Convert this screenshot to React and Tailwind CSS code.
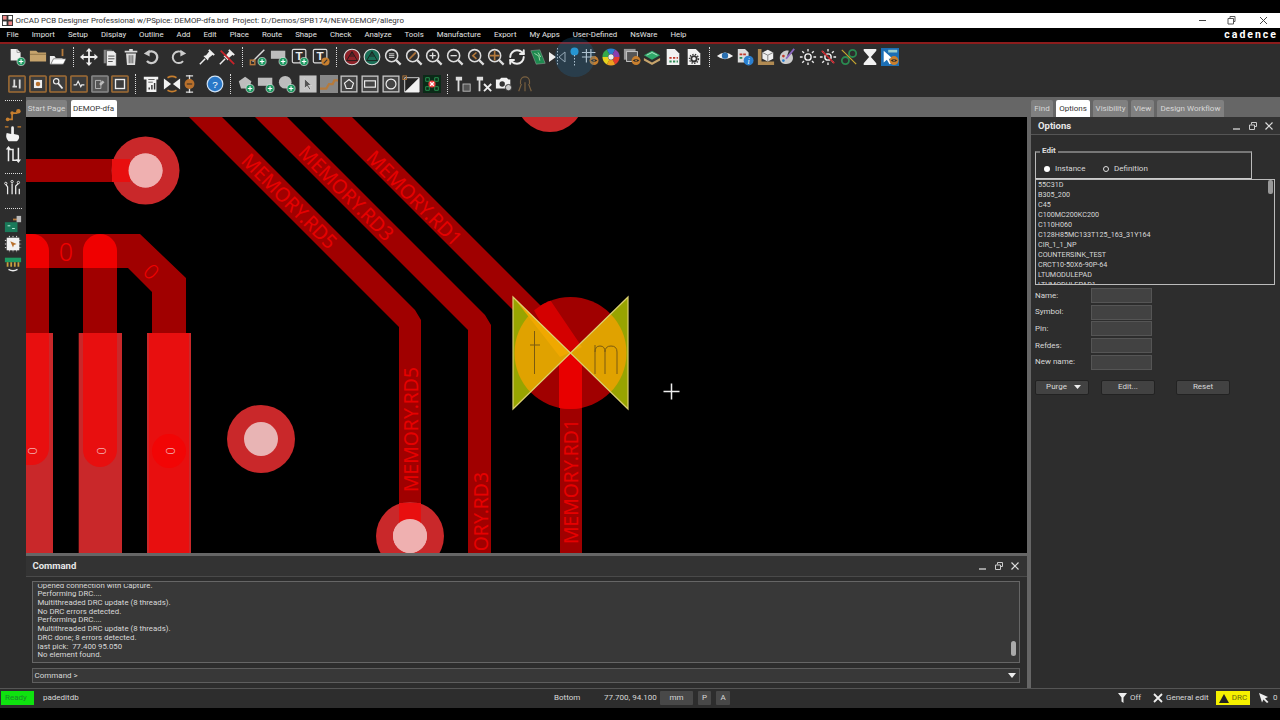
import React from "react";
import { RefreshCw } from "lucide-react";

const S = ({ children, vb = "0 0 20 20", cls = "w-[18px] h-[18px]" }) => (
  <svg viewBox={vb} className={cls} fill="none">{children}</svg>
);
const Plus = () => (
  <g><circle cx="14.5" cy="15" r="4.5" fill="#1e9b62" stroke="#e8e8e8" strokeWidth=".7" /><path d="M14.5 12.5v5M12 15h5" stroke="#fff" strokeWidth="1.3" /></g>
);
const Eyeb = () => (
  <g><circle cx="14.5" cy="14" r="5" fill="#c87f2e" /><path d="M10.8 14q3.7-3 7.4 0q-3.7 3-7.4 0z" fill="#2b2b2b" /><circle cx="14.5" cy="14" r="1" fill="#c87f2e" /></g>
);
const New = () => <S><path d="M3 1h7l4 4v9H3z" fill="#eee" /><path d="M10 1v4h4" stroke="#999" /><Plus /></S>;
const Open = () => <S><path d="M1 3h7l2 2h9v10H1z" fill="#c7a46c" /><path d="M1 7h18" stroke="#8d7346" /></S>;
const Folder2 = () => <S><path d="M1 9h5l1.500 2H15v7H1z" fill="#eee" /><path d="M2 18l3-6h14l-3 6z" fill="#fff" stroke="#333" strokeWidth=".6" /><path d="M15 1v8" stroke="#b57a3c" strokeWidth="2" /></S>;
const Move = () => <S><path d="M10 3v14M3 10h14" stroke="#eee" strokeWidth="2" /><path d="M10 0l3.500 4h-7zM10 20l3.500-4h-7zM0 10l4-3.500v7zM20 10l-4-3.500v7z" fill="#eee" /></S>;
const Copy = () => <S><path d="M3 2h9v15H3z" fill="#888" /><path d="M6 3h8l3 3v14H6z" fill="#eee" stroke="#2d2d2d" strokeWidth=".7" /><path d="M8 9h7M8 12h7M8 15h5" stroke="#444" /></S>;
const Trash = () => <S><path d="M3 4h14M8 2h4" stroke="#ddd" strokeWidth="2" /><path d="M4.500 6h11l-1 13h-9z" fill="#ddd" /><path d="M8 8v9M10 8v9M12 8v9" stroke="#555" /></S>;
const Undo = () => <S><path d="M6 5.500a6.500 6.500 0 1 1-.5 9" stroke="#ccc" strokeWidth="2.600" /><path d="M2 6l6.500-4v7.500z" fill="#ccc" /></S>;
const Redo = () => <S><path d="M14 5.500a6.500 6.500 0 1 0 .5 9" stroke="#ccc" strokeWidth="2.200" /><path d="M18 6l-6.500-4v7.500z" fill="#ccc" /></S>;
const PinI = ({ off }) => (
  <S><path d="M2 18l6-6" stroke="#eee" strokeWidth="1.600" /><path d="M6 9l3-1 4-5 4 4-5 4-1 3z" fill="#eee" /><path d="M12 2l6 6" stroke="#eee" strokeWidth="2" />{off && <path d="M3 3l15 15" stroke="#c8232a" strokeWidth="2" />}</S>
);
const LineI = () => <S><path d="M4 15L17 2" stroke="#ddd" strokeWidth="1.600" /><rect x="1.500" y="13.500" width="5" height="5" stroke="#b5763a" strokeWidth="1.600" /><Plus /></S>;
const RectP = () => <S><path d="M1 3h16v9H1z" fill="#bdbdbd" /><Plus /></S>;
const TBox = ({ o }) => (
  <S><rect x="1.500" y="1.500" width="15" height="15" rx="1.500" stroke="#ddd" strokeWidth="1.300" /><text x="9" y="13.500" textAnchor="middle" fontSize="13" fontWeight="700" fill="#eee" fontFamily="Liberation Sans">T</text>
    {o ? <g><circle cx="15" cy="15" r="4.500" fill="#c87f2e" /><path d="M13 17l4-4" stroke="#333" strokeWidth="1.300" /></g> : <Plus />}</S>
);
const Net = ({ c }) => <S><circle cx="10" cy="10" r="8.700" fill={c} stroke="#ddd" strokeWidth="1.200" /><path d="M10 4L16 14H4z" stroke="#1c1c1c" strokeWidth="1" /><path d="M10 4L7 10h6z" fill="#222" opacity=".5" /></S>;
const Mag = ({ children }) => <S><circle cx="8.500" cy="8.500" r="6.700" stroke="#ddd" strokeWidth="1.700" /><path d="M13.500 13.500l5 5" stroke="#ddd" strokeWidth="2.500" />{children}</S>;
const Board = () => <S><path d="M2 3l10-1 6 15-10 1z" fill="#1f8a50" stroke="#aaa" strokeWidth=".5" /><path d="M6 6l5 3 1 5M10 5l3 5" stroke="#a8e0b0" /></S>;
const NavArr = () => (
  <svg viewBox="0 0 21 20" className="w-[21px] h-5" fill="none"><path d="M1 5l7 5-7 5z" fill="#eee" /><path d="M17 5l-6 5 6 5z" stroke="#bbb" /><path d="M9.500 1v18" stroke="#ccc" strokeDasharray="1.500 1.500" /></svg>
);
const BluePin = () => (
  <svg viewBox="0 0 11 20" className="w-[11px] h-5" fill="none"><circle cx="5.500" cy="4.500" r="4" fill="#2aa3e0" /><path d="M5.500 8v11" stroke="#ddd" strokeDasharray="1.500 1.500" /></svg>
);
const GridE = () => <S><path d="M6 1v15M11 1v15M1 5h15M1 10h15" stroke="#ddd" strokeWidth="1.300" /><Eyeb /></S>;
const Wheel = () => (
  <S>{["#e33b2e", "#f0a020", "#e8d21e", "#37a84a", "#2a7fd0", "#8a3fb0"].map((c, i) => (
    <circle key={c} cx="10" cy="10" r="6.500" stroke={c} strokeWidth="6" pathLength="6" strokeDasharray="1 5" strokeDashoffset={-i} />
  ))}<circle cx="10" cy="10" r="3" fill="#eee" /></S>
);
const CopyE = () => <S><rect x="1" y="1" width="13" height="12" fill="#999" /><rect x="4" y="4" width="12" height="11" fill="#555" stroke="#ccc" /><Eyeb /></S>;
const Stack = () => <S><path d="M1 8l9-5 9 5-9 5z" fill="#2fa86a" /><path d="M1 11l9 5 9-5v3l-9 5-9-5z" fill="#c7a46c" /><path d="M4 8l6-3 6 3" stroke="#bfe8cf" /></S>;
const DocT = () => <S><path d="M3 1h9l5 5v13H3z" fill="#f2f2f2" /><path d="M6 10h2.500v2H6zM10 10h2.500v2H10zM14 10h1.500v2H14z" fill="#c0392b" /><path d="M6 14h2.500v2H6zM10 14h2.500v2H10zM14 14h1.500v2H14z" fill="#2e8b57" /></S>;
const DocG = () => <S><path d="M3 1h9l5 5v13H3z" fill="#f2f2f2" /><circle cx="10" cy="12" r="3" stroke="#333" strokeWidth="2" /><circle cx="10" cy="12" r="5" stroke="#333" strokeWidth="1.500" strokeDasharray="1.500 1.500" /></S>;
const Eye = () => <S><path d="M1 9q9-8 18 0q-9 7-18 0z" fill="#f2f2f2" /><circle cx="10" cy="8.500" r="3.500" fill="#2a6fb0" /></S>;
const DocI = () => <S><path d="M2 1h8l4 4v11H2z" fill="#ddd" /><path d="M4 6h3v2H4zM8 6h3v2H8z" fill="#c0392b" /><path d="M4 10h3v2H4z" fill="#2e8b57" /><circle cx="14" cy="14" r="5.500" fill="#2a7fd0" /><text x="14" y="17.500" textAnchor="middle" fontSize="9" fill="#fff" fontFamily="Liberation Serif" fontStyle="italic">i</text></S>;
const Ruler = () => <S><path d="M1 1h4v14h14v4H1z" fill="#b08a52" /><path d="M12 2l6 3v7l-6 3-6-3V5z" fill="#eee" /><path d="M6 5l6 3 6-3M12 8v7" stroke="#777" /></S>;
const Palette = () => <S><path d="M2 11C2 5 8 2 12 3l-2 6 5-3c2 3 3 8-2 11-4 2-11 1-11-6z" fill="#ccc" /><path d="M18 1L9 12" stroke="#8a66c0" strokeWidth="2" /><circle cx="6" cy="9" r="1.500" fill="#c0392b" /><circle cx="6" cy="14" r="1.500" fill="#2a7fd0" /></S>;
const Sun = ({ off }) => <S><circle cx="10" cy="10" r="3.500" stroke="#eee" strokeWidth="1.600" /><path d="M10 1v3M10 16v3M1 10h3M16 10h3M3.600 3.600l2 2M14.400 14.400l2 2M3.600 16.400l2-2M14.400 5.600l2-2" stroke="#eee" strokeWidth="1.500" />{off && <path d="M3 3l14 14" stroke="#c8232a" strokeWidth="1.800" />}</S>;
const Conn = () => <S><circle cx="6" cy="14" r="4" stroke="#2a8a50" strokeWidth="2" /><circle cx="14" cy="6" r="4" stroke="#2a8a50" strokeWidth="2" /><path d="M2 2l16 16" stroke="#c8a830" strokeWidth="1.300" /></S>;
const Hour = () => <S><path d="M3 1h14v2l-6 7 6 7v2H3v-2l6-7-6-7z" fill="#f2f2f2" /></S>;
const BlueBox = () => <S><rect x="0" y="0" width="20" height="20" fill="#1c6fb5" /><path d="M3 3v13l3.500-3 3 5 2-1-3-5h4.500z" fill="#fff" /><rect x="8" y="2" width="10" height="3" fill="#9cc" /><Eyeb /></S>;
const OBox = ({ g, children }) => (
  <S><rect x="1" y="1" width="18" height="18" rx="1" fill={g ? "#555" : "#3c3c3c"} stroke={g ? "#888" : "#a06c34"} strokeWidth="1.700" />{children}</S>
);
const LBox = ({ children }) => <S><rect x="0.500" y="0.500" width="19" height="19" fill="#c4c4c4" />{children}</S>;
const DocBars = () => <S><path d="M2 2h16v3h-2v14H5V5H2z" fill="#f2f2f2" /><path d="M8 16v-2M11 16v-5M14 16v-7" stroke="#333" strokeWidth="1.600" /><path d="M7 5h7M7 8h5" stroke="#555" /></S>;
const Swap = () => <S><path d="M1 4l8 6-8 6zM19 4l-8 6 8 6z" fill="#f2f2f2" /><path d="M5 3q5-3 10 0M5 17q5 3 10 0" stroke="#c87f2e" strokeWidth="1.800" /></S>;
const Comp = () => (
  <svg viewBox="0 0 14 20" className="w-[13px] h-[18px]" fill="none"><path d="M7 0v20M3 1h8M3 19h8" stroke="#ddd" strokeWidth="1.500" /><circle cx="7" cy="10" r="5.500" fill="#b8702c" /><path d="M4 10h6" stroke="#222" /></svg>
);
const Help = () => <S><circle cx="10" cy="10" r="8.700" fill="#2a78c8" stroke="#cfe2f5" strokeWidth="1.300" /><text x="10" y="14" textAnchor="middle" fontSize="11" fill="#fff" fontFamily="Liberation Sans">?</text></S>;
const PentP = () => <S><path d="M9 2l7 5-2.500 8h-9L2 7z" fill="#bdbdbd" /><Plus /></S>;
const CircP = () => <S><circle cx="8" cy="8" r="7" fill="#bdbdbd" /><Plus /></S>;
const Chip = () => <S><rect x="0" y="0" width="20" height="20" fill="#0b2a18" /><path d="M3 3h4v4H3zM13 3h4v4h-4zM3 13h4v4H3zM13 13h4v4h-4z" stroke="#2a9a55" /><circle cx="10" cy="10" r="4" fill="#e44" /><path d="M8 8l4 4M12 8l-4 4" stroke="#fff" strokeWidth="1.400" /></S>;
const Tool1 = () => <S><path d="M2 2h7v4H6v12H4V6H2z" fill="#ddd" /><rect x="10" y="10" width="8" height="8" fill="#555" stroke="#bbb" /></S>;
const Tool2 = () => <S><path d="M2 2h7v4H6v12H4V6H2z" fill="#ddd" /><path d="M10 10l8 8M18 10l-8 8" stroke="#eee" strokeWidth="2" /></S>;
const Camera = () => <S><path d="M1 5h4l2-2h6l2 2h2v10H1z" fill="#f2f2f2" /><circle cx="8" cy="10" r="3" fill="#333" /><circle cx="15" cy="14" r="3.500" fill="#ccc" stroke="#333" /></S>;
const Fan = () => <S><path d="M10 2a5 5 0 0 1 5 5v3M10 2a5 5 0 0 0-5 5v3M3 18l3-8M17 18l-3-8M10 8v10" stroke="#7a6140" strokeWidth="1.300" /></S>;

const Slot = ({ children, w = "w-[20.700px]" }) => <div className={`${w} h-5 flex items-center justify-center shrink-0`}>{children}</div>;
const Sep = () => (
  <div className="w-[10.300px] h-5 flex justify-center shrink-0"><div className="w-0 h-full border-l border-dotted border-[#ddd]" /></div>
);
const HDots = () => <div className="w-[17px] h-0 border-t border-dotted border-[#ddd]" />;

const menu = ["File", "Import", "Setup", "Display", "Outline", "Add", "Edit", "Place", "Route", "Shape", "Check", "Analyze", "Tools", "Manufacture", "Export", "My Apps", "User-Defined", "NsWare", "Help"];

const TR = "#a00000";
const RING = "#c9282a";
const HOT = "#e80f0f";
const LBL = "#e60000";

function Label({ t, x, y, r, len = 125 }) {
  return (
    <text transform={`translate(${x},${y}) rotate(${r})`} fontFamily="Noto Sans" fontSize="20" fill={LBL} textLength={len} lengthAdjust="spacingAndGlyphs">{t}</text>
  );
}
function Via({ x, y, hole = "#efb0b0" }) {
  return <g><circle cx={x} cy={y} r="34" fill={RING} /><circle cx={x} cy={y} r="17" fill={hole} /></g>;
}
function Canvas() {
  return (
    <svg viewBox="26 117 1001 436" className="w-[1001px] h-[436px] block bg-black">
      <defs>
        <clipPath id="bt"><path d="M513 297L570.500 353L513 409zM628 297L570.500 353L628 409z" /></clipPath>
        <clipPath id="disc"><circle cx="570.500" cy="353" r="56" /></clipPath>
      </defs>
      <path d="M189 117h33l193 193 6 10v233h-22V327z" fill={TR} />
      <path d="M255 117h32l198 198 6 10v228h-23V330z" fill={TR} />
      <path d="M320 117h32l230 230v206h-22V357z" fill={TR} />
      <circle cx="550" cy="98" r="34" fill={RING} />
      <rect x="26" y="159" width="100" height="23" fill={TR} />
      <Via x={145.500} y={170.500} />
      <rect x="112" y="159" width="18" height="23" fill={HOT} />
      <circle cx="145.500" cy="170.500" r="17" fill="#efb0b0" />
      <path d="M26 234h114l46 44v55h-34v-41l-24-24H117v65H83v-65H49v65H26z" fill={TR} />
      <path d="M26 234h6a17 17 0 0 1 17 17v17H26z" fill="#f00000" />
      <path d="M83 268v-17a17 17 0 0 1 34 0v17z" fill="#f00000" />
      <text transform="translate(66,261)" fontFamily="Noto Sans" fontSize="25" textAnchor="middle" fontWeight="300" fill="#f00000">0</text>
      <text transform="translate(146,277) rotate(45)" fontFamily="Noto Sans" fontSize="21" textAnchor="middle" fontWeight="300" fill="#f00000">0</text>
      <rect x="26" y="333" width="27" height="220" fill={RING} />
      <rect x="78.700" y="333" width="43.300" height="220" fill={RING} />
      <rect x="147" y="333" width="44" height="220" fill={RING} />
      <path d="M26 333h23v115a17 17 0 0 1-17 17h-6z" fill={HOT} />
      <path d="M83 333h34v117a17 17 0 0 1-34 0z" fill={HOT} />
      <rect x="149" y="333" width="40" height="220" fill={HOT} />
      <circle cx="169" cy="451" r="17" fill="#f20505" />
      {[32, 101, 170].map((x) => (
        <text key={x} transform={`translate(${x - 4},451) rotate(90)`} fontFamily="Noto Sans" fontSize="13" textAnchor="middle" fill="#f3b0b0" fontWeight="300">0</text>
      ))}
      <Via x={261} y={439} hole="#e8b4b4" />
      <Via x={410} y={536} />
      <rect x="399" y="503" width="22" height="20" fill={HOT} />
      <circle cx="410" cy="536" r="17" fill="#efb0b0" />
      <circle cx="570.500" cy="353" r="56" fill={TR} />
      <g clipPath="url(#disc)">
        <path d="M520 285l20 0 42 62v70h-22v-60z" fill="#d40000" />
        <rect x="559" y="353" width="23" height="60" fill="#e80000" />
      </g>
      <path d="M513 297L570.500 353L513 409zM628 297L570.500 353L628 409z" fill="#98a400" />
      <g clipPath="url(#bt)">
        <circle cx="570.500" cy="353" r="56" fill="#e0a200" />
        <path d="M500 280l32 0 50 67-22 10z" fill="#f0a800" />
      </g>
      <path d="M513 297L570.500 353L513 409zM628 297L570.500 353L628 409z" fill="none" stroke="#dcd070" strokeWidth="1.200" />
      <path d="M534.500 331v43M530 345h10M595 374v-29M595 352q0-6 5-6t5 6v22M605 352q0-6 6-6t6 6v22" stroke="#7a5a10" strokeWidth="1" fill="none" />
      <Label t="MEMORY.RD5" x={240} y={162} r={45} />
      <Label t="MEMORY.RD3" x={297} y={154} r={45} />
      <Label t="MEMORY.RD1" x={365} y={159} r={45} />
      <Label t="MEMORY.RD5" x={418} y={492} r={-90} />
      <Label t="MEMORY.RD3" x={488} y={597} r={-90} />
      <Label t="MEMORY.RD1" x={578} y={544} r={-90} />
      <path d="M663.500 391.500h16M671.500 383.500v16" stroke="#eee" strokeWidth="1.500" />
    </svg>
  );
}

const DockBtns = () => (
  <div className="flex items-center gap-[8px]">
    <svg viewBox="0 0 8 8" className="w-2 h-2" fill="none"><path d="M0 7h7" stroke="#ccc" strokeWidth="1.400" /></svg>
    <svg viewBox="0 0 8 8" className="w-2 h-2" fill="none"><path d="M2.500 2.500V.5h5v4h-2M.5 3h5v4.500h-5z" stroke="#ccc" /></svg>
    <svg viewBox="0 0 8 8" className="w-2 h-2" fill="none"><path d="M.5.5l7 7M7.500.5l-7 7" stroke="#ddd" strokeWidth="1.200" /></svg>
  </div>
);
const Tab = ({ w, active, children }) => (
  <div className={`${w} h-[17px] rounded-t-[2px] flex items-center justify-center whitespace-nowrap text-[8px] ${active ? "bg-white text-[#333]" : "bg-[#808080] text-[#d8d8d8]"}`}>{children}</div>
);
const parts = ["55C31D", "B305_200", "C45", "C100MC200KC200", "C110H060", "C128H85MC133T125_163_31Y164", "CIR_1_1_NP", "COUNTERSINK_TEST", "CRCT10-50X6-90P-64", "LTUMODULEPAD", "LTUMODULEPAD1"];
const fields = ["Name:", "Symbol:", "Pin:", "Refdes:", "New name:"];
const log = ["Opened connection with Capture.", "Performing DRC....", "Multithreaded DRC update (8 threads).", "No DRC errors detected.", "Performing DRC....", "Multithreaded DRC update (8 threads).", "DRC done; 8 errors detected.", "last pick:  77.400 95.050", "No element found."];

export default function App() {
  return (
    <div className="w-[1280px] h-[720px] bg-black overflow-hidden flex flex-col font-['Roboto',sans-serif] text-[#d8d8d8]">
      <div className="h-[13px] shrink-0" />
      <div className="h-[15px] bg-white flex items-center text-[#333] text-[7.900px] whitespace-pre shrink-0">
        <svg viewBox="0 0 12 12" className="w-[11px] h-[11px] ml-[2px] mr-[2.500px]"><rect width="12" height="12" fill="#333" /><rect x="1" y="1" width="4" height="4" fill="#e88" /><rect x="7" y="1" width="4" height="4" fill="#fff" /><rect x="1" y="7" width="4" height="4" fill="#fff" /><rect x="7" y="7" width="4" height="4" fill="#e88" /></svg>
        <span>OrCAD PCB Designer Professional w/PSpice: DEMOP-dfa.brd  Project: D:/Demos/SPB174/NEW-DEMOP/allegro</span>
        <div className="ml-auto flex items-center gap-[20px] mr-[12px]">
          <svg viewBox="0 0 9 9" className="w-[9px] h-[9px]" fill="none"><path d="M1 4.500h7" stroke="#444" /></svg>
          <svg viewBox="0 0 9 9" className="w-[9px] h-[9px] mr-[3px]" fill="none"><path d="M3 2V.5h5v5H6.500M1 2.500h5.500v5.500H1z" stroke="#555" /></svg>
          <svg viewBox="0 0 9 9" className="w-[9px] h-[9px]" fill="none"><path d="M1 1l7 7M8 1l-7 7" stroke="#444" /></svg>
        </div>
      </div>
      <div className="h-[14px] flex items-center text-[7.800px] text-[#e4e4e4] pl-[6.500px] gap-[13px] whitespace-nowrap shrink-0">
        {menu.map((m) => <span key={m}>{m}</span>)}
        <span className="ml-auto mr-[2px] text-[10.500px] font-bold tracking-[2px] text-white">cadence</span>
      </div>
      <div className="h-[2px] bg-[#8c1c1c] shrink-0" />

      <div className="h-[53px] bg-[#2d2d2d] pt-[3px] pl-[6.650px] flex flex-col gap-[7px] relative shrink-0">
        <div className="flex items-center h-5">
          <Slot><New /></Slot><Slot><Open /></Slot><Slot><Folder2 /></Slot><Sep />
          <Slot><Move /></Slot><Slot><Copy /></Slot><Slot><Trash /></Slot><Slot><Undo /></Slot>
          <div className="w-[7px]" /><Slot><Redo /></Slot><div className="w-[7px]" />
          <Slot><PinI /></Slot><Slot><PinI off /></Slot><Sep />
          <Slot><LineI /></Slot><Slot><RectP /></Slot><Slot><TBox /></Slot><Slot><TBox o /></Slot><Sep />
          <Slot><Net c="#8e2128" /></Slot><Slot><Net c="#1a6e56" /></Slot>
          <Slot><Mag><path d="M5.500 6.500h6M5.500 8.500h6M5.500 10.500h6" stroke="#ddd" /></Mag></Slot>
          <Slot><Mag><path d="M5 12l7-7" stroke="#a8703a" strokeWidth="2" /></Mag></Slot>
          <Slot><Mag><path d="M8.500 5v7M5 8.500h7" stroke="#ddd" strokeWidth="1.500" /></Mag></Slot>
          <Slot><Mag><path d="M5 8.500h7" stroke="#ddd" strokeWidth="1.500" /></Mag></Slot>
          <Slot><Mag><path d="M10.500 5l-4 3.500 4 3.500" stroke="#b57a3c" strokeWidth="1.800" /></Mag></Slot>
          <Slot><Mag><path d="M8.500 3v11M3 8.500h11" stroke="#b57a3c" strokeWidth="1.800" /></Mag></Slot>
          <Slot><RefreshCw size={18} strokeWidth={2.600} color="#eee" /></Slot>
          <Slot><Board /></Slot>
          <Slot w="w-[21px]"><NavArr /></Slot>
          <Slot w="w-[11px]"><BluePin /></Slot>
          <Slot><GridE /></Slot><Slot><Wheel /></Slot><Slot><CopyE /></Slot><Slot><Stack /></Slot><Slot><DocT /></Slot><Slot><DocG /></Slot><Sep />
          <Slot><Eye /></Slot><Slot><DocI /></Slot><Slot><Ruler /></Slot><Slot><Palette /></Slot><Slot><Sun /></Slot><Slot><Sun off /></Slot><Slot><Conn /></Slot><Slot><Hour /></Slot><Slot><BlueBox /></Slot>
        </div>
        <div className="flex items-center h-5">
          <Slot><OBox><path d="M7 5v8M13 5v10M5 13h5" stroke="#ddd" strokeWidth="2" /></OBox></Slot>
          <Slot><OBox><rect x="5.500" y="5.500" width="9" height="9" fill="#eee" /><circle cx="10" cy="10" r="2.500" fill="#b8702c" /></OBox></Slot>
          <Slot><OBox><circle cx="8" cy="7" r="3" stroke="#eee" strokeWidth="1.300" /><path d="M10 9l5 6" stroke="#eee" strokeWidth="2" /></OBox></Slot>
          <Slot><OBox><path d="M4 11h3l2-4 3 6 1-2h3" stroke="#eee" strokeWidth="1.300" /></OBox></Slot>
          <Slot><OBox g><path d="M5 6h6v9H5z" stroke="#bbb" /><path d="M9 10l4-4 2 2-4 4z" fill="#bbb" /></OBox></Slot>
          <Slot><OBox><rect x="5" y="5" width="10" height="10" stroke="#eee" strokeWidth="1.500" /></OBox></Slot>
          <Sep />
          <Slot><DocBars /></Slot><Slot><Swap /></Slot>
          <Slot w="w-[14px]"><Comp /></Slot>
          <div className="w-[8px]" />
          <Slot><Help /></Slot>
          <Sep />
          <Slot><PentP /></Slot><Slot><RectP /></Slot><Slot><CircP /></Slot>
          <Slot><LBox><path d="M6 4v11l3-2.500 2.500 4 1.500-1-2.500-4H14z" fill="#555" stroke="#eee" strokeWidth=".7" /></LBox></Slot>
          <Slot><S><rect width="20" height="20" fill="#888" /><path d="M0 15h7l3-5h4l2-4h4" stroke="#b57a3c" strokeWidth="2.500" /></S></Slot>
          <Slot><LBox><rect x="2" y="2" width="16" height="16" fill="#444" /><path d="M10 5l5 4-2 6H7l-2-6z" stroke="#eee" strokeWidth="1.300" /></LBox></Slot>
          <Slot><LBox><rect x="2" y="2" width="16" height="16" fill="#444" /><rect x="4" y="6.500" width="12" height="7" stroke="#eee" strokeWidth="1.300" /></LBox></Slot>
          <Slot><LBox><rect x="2" y="2" width="16" height="16" fill="#444" /><circle cx="10" cy="10" r="5.500" stroke="#eee" strokeWidth="1.300" /></LBox></Slot>
          <Slot><S><path d="M3 3h16v16H3z" fill="#222" stroke="#ddd" /><path d="M19 3v16H3z" fill="#f2f2f2" /><rect x="1" y="1" width="4" height="4" stroke="#b57a3c" /></S></Slot>
          <Slot><Chip /></Slot>
          <Sep />
          <Slot><Tool1 /></Slot><Slot><Tool2 /></Slot><Slot><Camera /></Slot><Slot><Fan /></Slot>
        </div>
        <div className="absolute left-[555px] top-[-7px] w-10 h-10 rounded-full bg-[#1f6fa8] opacity-25" />
      </div>

      <div className="h-[591px] flex shrink-0 bg-[#666]">
        <div className="w-[26px] bg-[#2d2d2d] flex flex-col items-center pt-[3px] shrink-0">
          <HDots />
          <div className="mt-[4px] flex flex-col items-center gap-[2px]">
            <S><path d="M4 16h5v-7h6" stroke="#c87f2e" strokeWidth="1.800" /><circle cx="4" cy="16" r="2" fill="#c87f2e" /><circle cx="9" cy="9" r="2" fill="#c87f2e" /><circle cx="16" cy="7" r="2.500" fill="#c87f2e" /></S>
            <S><path d="M5 18c-3-3-3-6-2-9l5 1V3a1.500 1.500 0 0 1 3 0v7l5 1c2 3 0 6-2 7z" fill="#f2f2f2" /><path d="M1 2h4M15 2h4" stroke="#c87f2e" strokeWidth="1.500" /></S>
            <S><path d="M5 18V5h5v12h6V3" stroke="#eee" strokeWidth="1.700" /><path d="M5 1l3 4H2zM16 20l-3-4h6z" fill="#eee" /></S>
          </div>
          <div className="mt-[10px]"><HDots /></div>
          <div className="mt-[4px]"><S><path d="M4 18V10L2 7M9 18V6M13 18V9l3-3M17 18v-6" stroke="#eee" strokeWidth="1.400" /><circle cx="2" cy="6" r="1.300" stroke="#eee" /><circle cx="9" cy="4" r="1.300" stroke="#eee" /><circle cx="16" cy="5" r="1.300" stroke="#eee" /></S></div>
          <div className="mt-[12px]"><HDots /></div>
          <div className="mt-[6px] flex flex-col items-center gap-[2px]">
            <S><rect x="1" y="8" width="14" height="11" fill="#1a7a5a" /><path d="M10 5h6" stroke="#b57a3c" strokeWidth="2" /><rect x="14" y="1" width="5" height="7" fill="#bbb" /><path d="M4 12h3M9 15h3" stroke="#cfe" /></S>
            <S><rect x="3" y="3" width="14" height="14" fill="#f2f2f2" /><path d="M6 1v18M10 1v18M14 1v18M1 6h18M1 10h18M1 14h18" stroke="#f2f2f2" strokeDasharray="1.500 1" /><path d="M7 7l7 3-3 1-1 3z" fill="#b8702c" /></S>
            <S><rect x="1" y="3" width="18" height="5" fill="#1e9b62" /><path d="M4 8v5M8 8v5M12 8v5M16 8v5" stroke="#c8a040" strokeWidth="2" /><path d="M5 16q5 3 10 0" stroke="#eee" strokeWidth="1.500" /></S>
          </div>
        </div>
        <div className="w-[1001px] flex flex-col shrink-0">
          <div className="h-5 flex items-end gap-[3.500px] shrink-0">
            <Tab w="w-[41px]">Start Page</Tab>
            <Tab w="w-[46px]" active>DEMOP-dfa</Tab>
          </div>
          <Canvas />
          <div className="flex-1 mt-[3px] bg-[#2d2d2d] flex flex-col min-h-0">
            <div className="h-[21px] bg-[#333] border-b border-[#4a4a4a] flex items-center justify-between pl-[6.500px] pr-[8px] shrink-0">
              <span className="text-[9.500px] font-bold text-[#e8e8e8]">Command</span>
              <DockBtns />
            </div>
            <div className="mt-[4px] ml-[6px] mr-[7px] h-[82px] border border-[#666] bg-[#383838] flex shrink-0">
              <div className="flex-1 h-[76px] mt-[2px] overflow-hidden flex flex-col justify-end pl-[4.500px] text-[7.800px] leading-[8.700px] whitespace-pre">
                {log.map((l, i) => <div key={i} className="shrink-0">{l}</div>)}
              </div>
              <div className="w-[5px] mr-[3px] mt-[59px] h-[15px] rounded-full bg-[#aaa]" />
            </div>
            <div className="mt-[5px] ml-[6px] mr-[7px] h-[15px] border border-[#5e5e5e] bg-[#383838] flex items-center justify-between pl-[1.500px] pr-[3px] text-[8px] shrink-0">
              <span>Command &gt;</span>
              <svg viewBox="0 0 8 6" className="w-2 h-[6px]"><path d="M0 0h8L4 5z" fill="#eee" /></svg>
            </div>
          </div>
        </div>
        <div className="w-[4px] shrink-0" />
        <div className="flex-1 flex flex-col min-w-0">
          <div className="h-5 flex items-end gap-[3px] shrink-0">
            <Tab w="w-[22px]">Find</Tab>
            <Tab w="w-[34px]" active>Options</Tab>
            <Tab w="w-[35px]">Visibility</Tab>
            <Tab w="w-[23px]">View</Tab>
            <Tab w="w-[67px]">Design Workflow</Tab>
          </div>
          <div className="flex-1 bg-[#2d2d2d] flex flex-col">
            <div className="h-[18px] bg-[#333] border-b border-[#555] flex items-center justify-between pl-[7px] pr-[7px] pt-[1px] shrink-0">
              <span className="text-[9.500px] font-bold text-[#e8e8e8]">Options</span>
              <DockBtns />
            </div>
            <div className="ml-[4px] mt-[16px] w-[217px] h-[28px] border border-t-[#777] border-x-[#bbb] border-b-[#ccc] border-t-2 relative flex items-center pl-[8px] gap-[5px] text-[8px] shrink-0">
              <span className="absolute left-[4px] -top-[7px] px-[2px] bg-[#2d2d2d] text-[8px] font-bold text-[#ddd] leading-[10px]">Edit</span>
              <span className="w-[6px] h-[6px] rounded-full bg-white mt-[6px]" />
              <span className="mt-[6px] w-[28px]">Instance</span>
              <span className="w-[6px] h-[6px] rounded-full border border-[#ddd] ml-[15px] mt-[6px]" />
              <span className="mt-[6px]">Definition</span>
            </div>
            <div className="ml-[4px] mr-[5px] h-[106px] border border-[#bbb] bg-[#2b2b2b] flex overflow-hidden shrink-0">
              <div className="flex-1 pl-[2px] text-[7.200px] leading-[10px] whitespace-nowrap">
                {parts.map((p) => <div key={p}>{p}</div>)}
              </div>
              <div className="w-[5px] h-[14px] mr-[1px] rounded-[2px] bg-[#999]" />
            </div>
            <div className="ml-[4px] mt-[3px] flex flex-col gap-[1.700px] shrink-0">
              {fields.map((f) => (
                <div key={f} className="flex items-center h-[15px] text-[8px]">
                  <span className="w-[56px]">{f}</span>
                  <div className="w-[61px] h-[15px] bg-[#424242] border border-[#555]" />
                </div>
              ))}
            </div>
            <div className="ml-[4px] mt-[10px] flex text-[8px] shrink-0">
              <div className="w-[54px] h-[15px] bg-[#424242] border border-[#222] rounded-[2px] flex items-center justify-center gap-[7px] pl-[3px]">Purge<svg viewBox="0 0 7 4" className="w-[7px] h-1"><path d="M0 0h7L3.500 4z" fill="#eee" /></svg></div>
              <div className="ml-[12px] w-[54px] h-[15px] bg-[#424242] border border-[#222] rounded-[2px] flex items-center justify-center">Edit...</div>
              <div className="ml-[21px] w-[54px] h-[15px] bg-[#424242] border border-[#222] rounded-[2px] flex items-center justify-center">Reset</div>
            </div>
          </div>
        </div>
      </div>

      <div className="h-5 bg-[#2d2d2d] border-t border-[#555] pb-[1px] flex items-center text-[8px] whitespace-nowrap shrink-0">
        <div className="ml-[1px] w-[33px] h-[14px] bg-[#0fe20f] text-[#1a8a2a] flex items-center pl-[4px]">Ready</div>
        <span className="ml-[9px] w-[511px]">padeditdb</span>
        <span className="w-[50px]">Bottom</span>
        <span className="w-[56px]">77.700, 94.100</span>
        <div className="w-[33px] h-[14px] bg-[#484848] rounded-[1px] flex items-center justify-center">mm</div>
        <div className="ml-[5px] w-[13px] h-[14px] bg-[#484848] rounded-[1px] flex items-center justify-center">P</div>
        <div className="ml-[5px] w-[14px] h-[14px] bg-[#484848] rounded-[1px] flex items-center justify-center">A</div>
        <div className="ml-auto flex items-center">
          <svg viewBox="0 0 9 10" className="w-[9px] h-[10px] mr-[3px]"><path d="M0 0h9L5.500 4.500V10L3.500 8.500V4.500z" fill="#eee" /></svg>
          <span className="w-[23px]">Off</span>
          <svg viewBox="0 0 10 10" className="w-[10px] h-[10px] mr-[3px]" fill="none"><path d="M1 1l8 8M9 1L1 9" stroke="#eee" strokeWidth="1.800" /></svg>
          <span className="w-[50px]">General edit</span>
          <div className="w-[34px] h-[14px] bg-[#f5f000] text-[#6a6a10] flex items-center justify-center gap-[3px]">
            <svg viewBox="0 0 10 9" className="w-[10px] h-[9px]"><path d="M5 0l5 9H0z" fill="#222" /></svg>DRC
          </div>
          <svg viewBox="0 0 10 10" className="w-[10px] h-[10px] ml-[9px] mr-[4px]"><path d="M0 0l9 4-3 1.500L9.500 9 8 10 4.500 6.500 3 9.500z" fill="#eee" /></svg>
          <span className="w-[7px]">0</span>
        </div>
      </div>
    </div>
  );
}
